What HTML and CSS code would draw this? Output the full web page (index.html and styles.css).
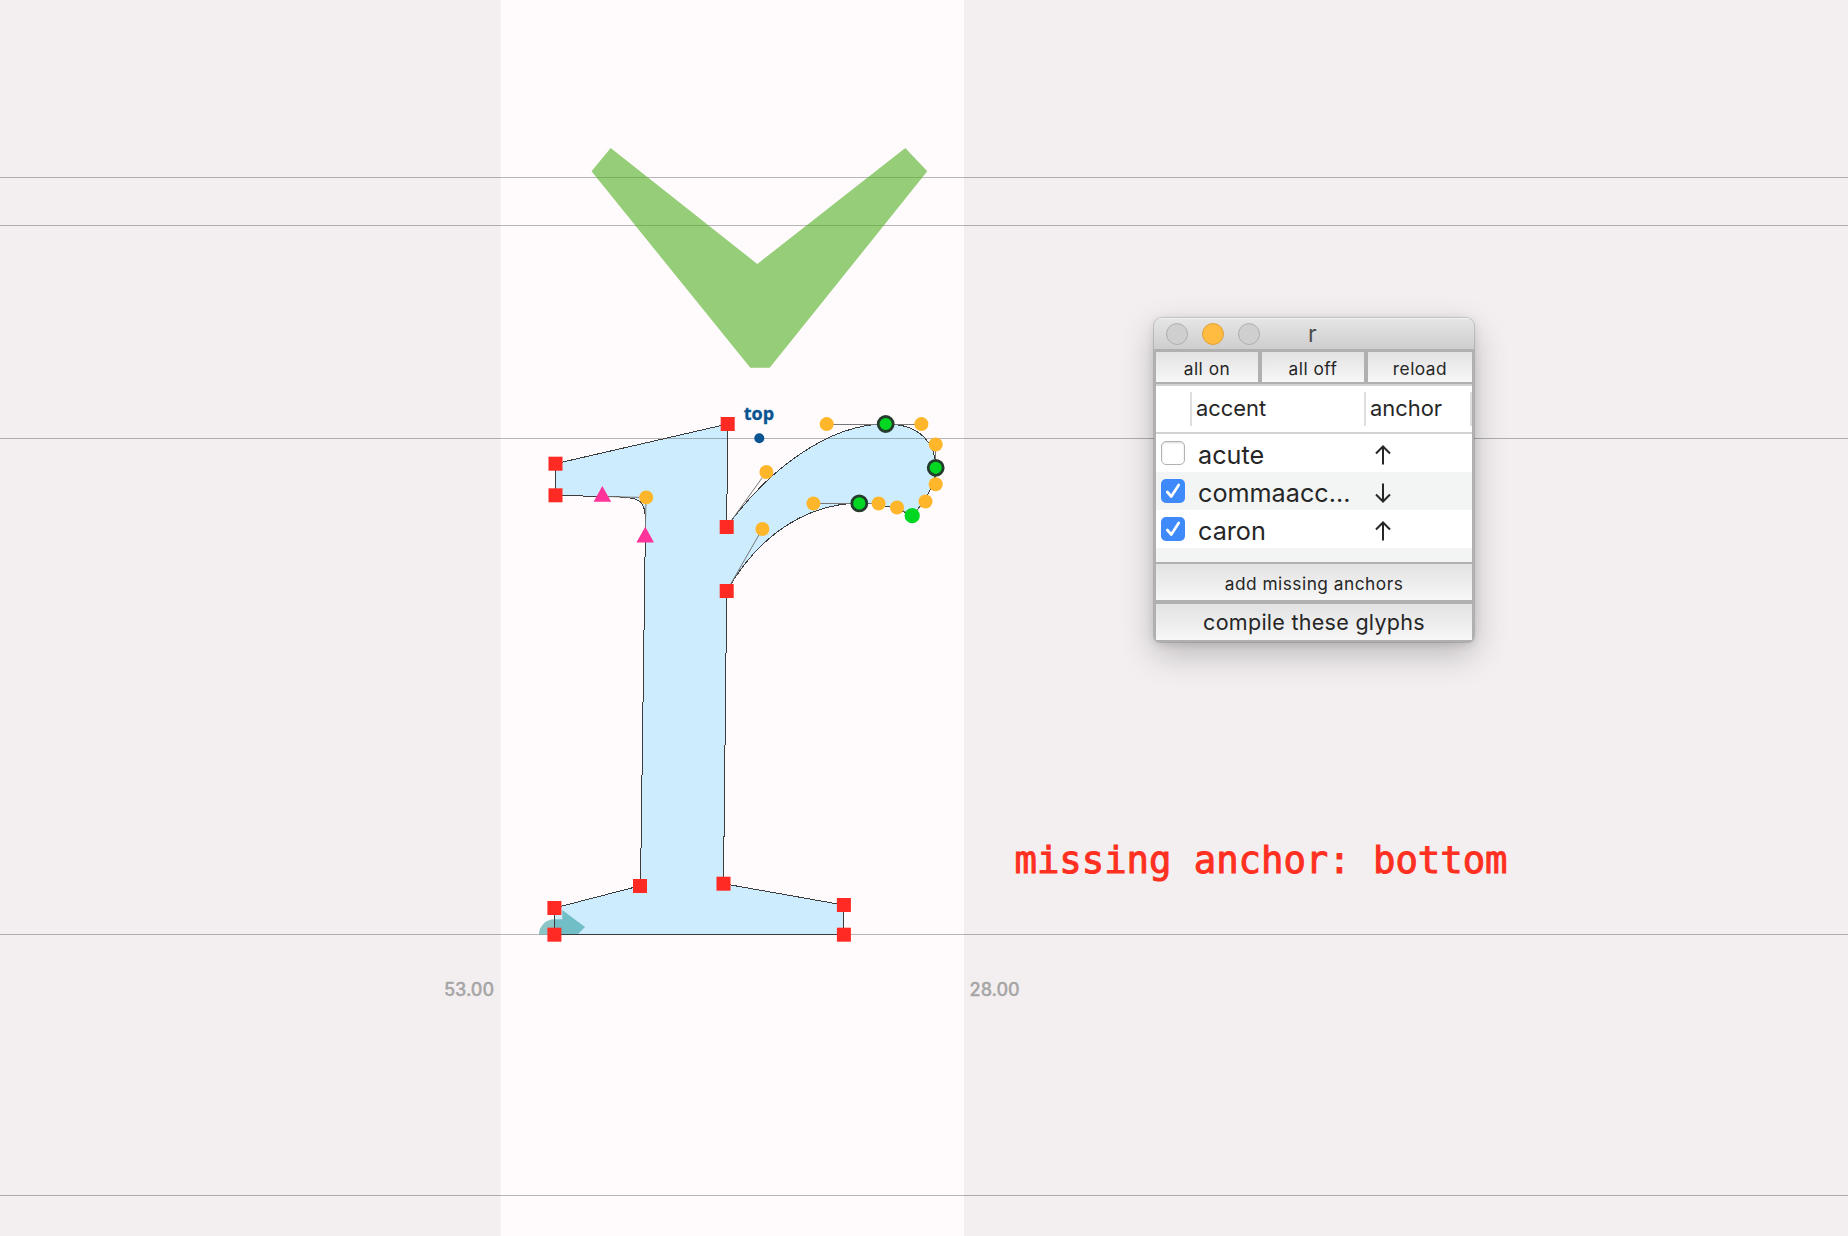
FILE: index.html
```html
<!DOCTYPE html>
<html lang="en">
<head>
<meta charset="utf-8">
<title>r</title>
<link rel="stylesheet" href="styles.css">
</head>
<body>
<main class="canvas">
  <svg class="drawing" width="1848" height="1236" viewBox="0 0 1848 1236">
    <rect class="advance" x="500.5" y="0" width="463.5" height="1236"/>
    <path class="glyph" d="M727.7 424L726.7 527C766.3 472 826.7 424 885.7 424C921.3 424 935.7 444.3 935.7 467.7C935.7 484 925.3 501.3 912 515.7C897 507.3 878.7 503.3 859.3 503.3C813.3 503.3 762.3 529 726.7 591L723.5 883.7L843.7 905V934.5H554.5V908L640.5 885.7L645.3 536C646 497.3 646 497.3 602.5 496.5L555.5 495.3V463.7Z"/>
    <g class="metrics">
      <path d="M0 177.5H1848M0 225.5H1848M0 438.5H1848M0 934.5H1848M0 1195.5H1848"/>
    </g>
    <path class="start" d="M539 934.5C539 926 546 919.3 554.3 919.3H562.3V910L585 927L577.7 934.5Z"/>
    <path class="outline" d="M727.7 424L726.7 527C766.3 472 826.7 424 885.7 424C921.3 424 935.7 444.3 935.7 467.7C935.7 484 925.3 501.3 912 515.7C897 507.3 878.7 503.3 859.3 503.3C813.3 503.3 762.3 529 726.7 591L723.5 883.7L843.5 905V934.5H554.5V908L640.5 885.7L645.3 536C646 497.3 646 497.3 602.5 496.5L555.5 495.3V463.7Z"/>
    <path class="handles" d="M726.7 527L766.3 472M726.7 591L762.3 529M826.7 424.5H921.3M935.5 444V484M813.3 503.5H878.7M602.5 496.5L646 497.5L645.3 536M912 515.7L925.3 501.3M912 515.7L897 507.3"/>
    <path class="caron" d="M610.7 148L757.3 264L905.3 148L927.3 171.3L769.7 367.8H750.3L591.5 171.3Z"/>
    <g class="off">
      <circle cx="646.2" cy="497.4" r="7"/><circle cx="766.4" cy="472" r="7"/>
      <circle cx="826.7" cy="424.1" r="7"/><circle cx="921.4" cy="424.1" r="7"/>
      <circle cx="935.7" cy="444.5" r="7"/><circle cx="935.7" cy="484.2" r="7"/>
      <circle cx="925.5" cy="501.5" r="7"/><circle cx="897" cy="507.5" r="7"/>
      <circle cx="878.6" cy="503.5" r="7"/><circle cx="813.4" cy="503.5" r="7"/>
      <circle cx="762.4" cy="529" r="7"/>
    </g>
    <g class="smooth">
      <circle cx="885.7" cy="424" r="7.5"/><circle cx="935.7" cy="467.8" r="7.5"/>
      <circle cx="859.3" cy="503.4" r="7.5"/>
    </g>
    <circle class="green" cx="912.2" cy="515.7" r="7.6"/>
    <path class="tangent" d="M602.3 486L611.2 501.7H593.6ZM645.3 526.7L654 542.5H636.4Z"/>
    <g class="corner">
      <rect x="720.7" y="417" width="14" height="14"/><rect x="719.7" y="520" width="14" height="14"/>
      <rect x="719.7" y="584" width="14" height="14"/><rect x="548.5" y="456.7" width="14" height="14"/>
      <rect x="548.5" y="488.3" width="14" height="14"/><rect x="633" y="879" width="14" height="14"/>
      <rect x="716.5" y="876.7" width="14" height="14"/><rect x="836.9" y="898" width="14" height="14"/>
      <rect x="836.9" y="927.7" width="14" height="14"/><rect x="547.4" y="927.7" width="14" height="14"/>
      <rect x="547.4" y="901" width="14" height="14"/>
    </g>
    <circle class="anchor" cx="759.3" cy="438.3" r="5"/>
    <text class="anchor-name" x="743.7" y="420">top</text>
    <text class="bearing" x="444" y="995.6" textLength="50">53.00</text>
    <text class="bearing" x="969.6" y="995.6" textLength="50">28.00</text>
    <text class="warning" x="1014.5" y="872.6" textLength="493">missing anchor: bottom</text>
  </svg>

  <section class="window">
    <header class="titlebar">
      <i class="light"></i><i class="light amber"></i><i class="light"></i>
      <h1 class="title">r</h1>
    </header>
    <div class="toolbar">
      <button class="btn">all on</button><button class="btn">all off</button><button class="btn">reload</button>
    </div>
    <div class="list">
      <div class="head"><span class="cell"></span><span class="cell">accent</span><span class="cell">anchor</span></div>
      <div class="row"><span class="box"></span><span class="name">acute</span>
        <svg class="arrow" width="16" height="20" viewBox="0 0 16 20"><path d="M8 19.5V2M1 8.5L8 1.5L15 8.5"/></svg></div>
      <div class="row"><span class="box on"><svg width="24" height="24" viewBox="0 0 24 24"><path d="M6.3 13L10.3 17.5L17.7 6"/></svg></span><span class="name">commaacc...</span>
        <svg class="arrow" width="16" height="20" viewBox="0 0 16 20"><path d="M8 .5V18M1 11.5L8 18.5L15 11.5"/></svg></div>
      <div class="row"><span class="box on"><svg width="24" height="24" viewBox="0 0 24 24"><path d="M6.3 13L10.3 17.5L17.7 6"/></svg></span><span class="name">caron</span>
        <svg class="arrow" width="16" height="20" viewBox="0 0 16 20"><path d="M8 19.5V2M1 8.5L8 1.5L15 8.5"/></svg></div>
      <div class="filler"></div>
    </div>
    <div class="actions">
      <button class="btn">add missing anchors</button>
      <button class="btn large">compile these glyphs</button>
    </div>
  </section>
</main>
</body>
</html>
```
FILE: styles.css
```css
* { box-sizing: border-box; }
body { margin: 0; background: #f3eff0; font-family: Inter, "Liberation Sans", sans-serif; color: #262626; }
.canvas { position: relative; width: 1848px; height: 1236px; overflow: hidden; }
.drawing { display: block; }
.advance { fill: #fffbfc; }
.glyph { fill: #cdedfe; }
.metrics { fill: none; stroke: #000; stroke-opacity: .28; }
.start { fill: #189090; fill-opacity: .5; }
.outline { fill: none; stroke: #3c3c3c; shape-rendering: crispEdges; }
.handles { fill: none; stroke: #777; }
.caron { fill: #4dae1c; fill-opacity: .59; }
.off { fill: #ffb62a; }
.smooth { fill: #00d722; stroke: #243c2c; stroke-width: 2.8; }
.green { fill: #00d722; }
.tangent { fill: #ff3399; }
.corner { fill: #ff2a24; }
.anchor, .anchor-name { fill: #0a5492; }
.anchor-name { font: bold 18px "Open Sans", sans-serif; stroke: #0a5492; stroke-width: .3px; }
.bearing { font-size: 18px; font-weight: 500; fill: #a6a5a5; stroke: #a6a5a5; stroke-width: .3px; }
.warning { font: 37.3px "DejaVu Sans Mono", monospace; fill: #ff3021; stroke: #ff3021; stroke-width: 1px; }

.window {
  position: absolute; left: 1154px; top: 318px; width: 320px; height: 324px;
  display: flex; flex-direction: column; overflow: hidden;
  border-radius: 8px 8px 6px 6px; background: #b0b0b0;
  padding: 0 2px 2px;
  box-shadow: 0 0 0 1px rgba(0,0,0,.12), 0 12px 34px rgba(0,0,0,.23), 0 2px 10px rgba(0,0,0,.12);
}
.titlebar {
  position: relative; flex: none; height: 31px; margin: 0 -2px; padding: 1px 0 0 12px;
  display: flex; align-items: center; gap: 14px;
  background: linear-gradient(#e6e6e6, #cecece); box-shadow: inset 0 1px #f2f2f2;
}
.light { width: 22px; height: 22px; border-radius: 50%; background: #cfcfcf; border: 1px solid #afafaf; }
.amber { background: #ffbc40; border-color: #dfa037; }
.title { margin: 0 0 0 34px; font-size: 23px; line-height: 24px; font-weight: 400; color: #4c4c4c; }
.toolbar { flex: none; display: grid; grid-template-columns: 102px 102px 104px; gap: 4px; height: 35px; padding: 3px 0 2px; }
.btn {
  border: 0; padding: 3px 0 0; margin: 0; font: 17.3px Inter, sans-serif; letter-spacing: .5px; color: #262626;
  background: linear-gradient(#e2e2e2, #f7f7f7);
}
.list { flex: none; height: 178px; border-top: 2px solid #d2d2d2; background: #fff; }
.head { display: flex; height: 48px; padding: 6px 0; border-bottom: 2px solid #d2d2d2; }
.cell { height: 34px; border-right: 2px solid #dedede; font-size: 21.9px; line-height: 32px; padding-left: 4px; }
.cell:nth-child(1) { width: 36px; }
.cell:nth-child(2) { width: 174px; }
.cell:nth-child(3) { width: 106px; }
.row { display: flex; height: 38px; padding-left: 5px; align-items: flex-start; padding-top: 7px; }
.row:nth-child(odd), .filler { background: #f3f5f5; }
.box { width: 24px; height: 24px; border-radius: 5px; border: 1px solid #b2b2b2; background: #fff; box-shadow: inset 0 1px 2px rgba(0,0,0,.15); }
.box.on { border: 0; background: #3f8afb; box-shadow: none; }
.box svg { display: block; fill: none; stroke: #fff; stroke-width: 2.7; stroke-linecap: round; stroke-linejoin: round; }
.name { width: 177px; margin-left: 13px; font-size: 25.2px; line-height: 28px; white-space: nowrap; }
.arrow { margin: 4px 0 0; fill: none; stroke: #262626; stroke-width: 2; }
.row:nth-child(2), .row:nth-child(4) { background: #fff; }
.filler { height: 14px; }
.actions { display: grid; grid-template-rows: 36px 36px; gap: 4px; padding-top: 2px; }
.large { padding: 0 0 1px; font-size: 21.5px; letter-spacing: .28px; }
```
